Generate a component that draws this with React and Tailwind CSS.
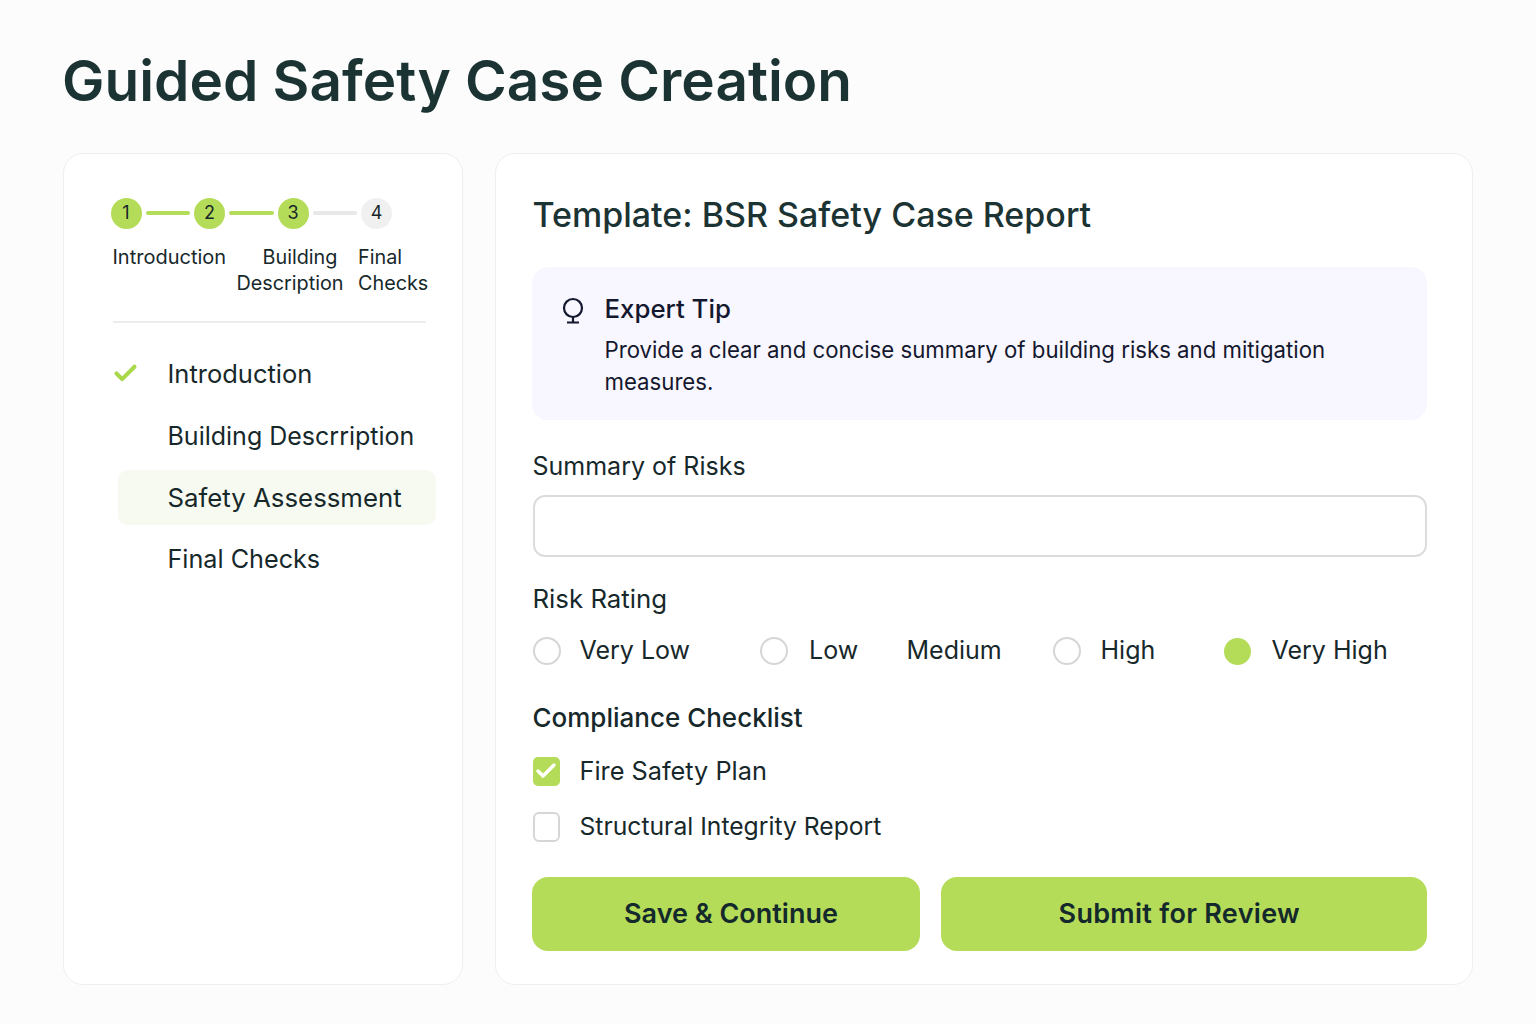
import React from 'react';
import { Check } from 'lucide-react';

const fontStack = "font-['Inter',sans-serif]";

const StepDot = ({ n, done }) => (
  <div
    className={`flex h-[31px] w-[31px] shrink-0 items-center justify-center rounded-full text-[18px] leading-none text-[#17252a] ${
      done ? 'bg-[#b4dc58]' : 'bg-[#f0f0f0]'
    }`}
  >
    {n}
  </div>
);

const StepLine = ({ done }) => (
  <div className={`mx-[4px] h-[4px] w-[44.5px] rounded-full ${done ? 'bg-[#b4dc58]' : 'bg-[#e8e8e8]'}`} />
);

const Radio = ({ on }) =>
  on ? (
    <span className="h-[27px] w-[27px] shrink-0 rounded-full bg-[#b4dc58]" />
  ) : (
    <span className="h-[28px] w-[28px] shrink-0 rounded-full border-2 border-[#d6d6d6] bg-white" />
  );

const RiskOption = ({ label, on, className, labelClass = 'ml-[19px]' }) => (
  <div className={`flex items-center ${className}`}>
    <Radio on={on} />
    <span className={labelClass}>{label}</span>
  </div>
);

export default function App() {
  return (
    <div className={`min-h-screen bg-[#fcfcfc] px-[63px] pt-[48px] text-[#17282b] ${fontStack}`}>
      <h1 className="-ml-[1px] h-[66px] text-[56.7px] font-semibold leading-[66px] text-[#1c3333]">
        Guided Safety Case Creation
      </h1>

      <div className="mt-[39px] flex h-[831.5px] gap-[32px]">
        {/* Steps */}
        <aside className="w-[400px] shrink-0 rounded-[20px] border-[1.5px] border-[#efefef] bg-white pl-[48.5px] pr-[36px] pt-[43.5px]">
          <div className="-ml-[2px] flex items-center">
            <StepDot n={1} done />
            <StepLine done />
            <StepDot n={2} done />
            <StepLine done />
            <StepDot n={3} done />
            <StepLine />
            <StepDot n={4} />
          </div>
          <div className="mt-[15px] flex h-[53px] text-[19.8px] leading-[26.5px]">
            <span className="w-[124px] shrink-0 text-[20px]">Introduction</span>
            <span className="w-[121.5px] shrink-0">
              <span className="pl-[26px]">Building</span>
              <br />
              Description
            </span>
            <span className="shrink-0">
              Final
              <br />
              Checks
            </span>
          </div>
          <div className="mt-[24px] h-[2px] bg-[#ececec]" />

          <ul className="mt-[20px] leading-[62px]">
            <li className="flex items-center text-[25.5px]">
              <Check className="-ml-[1px] h-[27px] w-[27px] text-[#a9d84b]" strokeWidth={3.6} />
              <span className="ml-[29px]">Introduction</span>
            </li>
            <li className="pl-[55px] text-[25px]">Building Descrription</li>
            <li className="-mr-[9.5px] ml-[5px] mt-[3px] rounded-[10px] bg-[#f6faf0] pl-[50px] text-[25.8px] leading-[55px]">
              Safety Assessment
            </li>
            <li className="pl-[55px] text-[25.2px] leading-[69px]">Final Checks</li>
          </ul>
        </aside>

        {/* Form */}
        <main className="flex-1 rounded-[20px] border-[1.5px] border-[#efefef] bg-white pl-[36.5px] pr-[45px] pt-[36px]">
          <h2 className="text-[34px] font-medium leading-[50px] text-[#1c3333]">
            Template: BSR Safety Case Report
          </h2>

          <div className="-ml-[1px] mt-[27px] flex h-[153px] rounded-[16px] bg-[#f8f6fe] pl-[29px] pt-[24px] text-[#14182e]">
            <svg viewBox="0 0 24 28" className="mt-[6px] h-[28px] w-[24px] shrink-0" fill="none" stroke="currentColor" strokeWidth="2.2">
              <circle cx="12" cy="11" r="9" />
              <path d="M12 20v5M6 25.5h12" />
            </svg>
            <div className="ml-[20px]">
              <div className="text-[25.8px] font-[450] leading-[36px]">Expert Tip</div>
              <p className="mt-[7px] w-[740px] text-[22.2px] leading-[32px]">
                Provide a clear and concise summary of building risks and mitigation measures.
              </p>
            </div>
          </div>

          <label className="mt-[28px] block text-[25px] leading-[36px]">Summary of Risks</label>
          <input className="mt-[11px] block h-[62px] w-full rounded-[12px] border-2 border-[#dcdcdc] bg-white outline-none" />

          <div className="mt-[24px] text-[25.8px] font-normal leading-[36px]">Risk Rating</div>
          <div className="mt-[16px] flex h-[36px] items-center text-[25px]">
            <RiskOption label="Very Low" className="w-[227.5px]" />
            <RiskOption label="Low" className="w-[146.5px]" labelClass="ml-[21px]" />
            <span className="w-[146px]">Medium</span>
            <RiskOption label="High" className="w-[171px]" labelClass="ml-[20px]" />
            <RiskOption label="Very High" on labelClass="ml-[21px]" />
          </div>

          <div className="mt-[31px] text-[26px] font-[450] leading-[36px]">Compliance Checklist</div>
          <div className="mt-[17px] flex h-[36px] items-center text-[25.3px]">
            <span className="flex h-[29px] w-[27.5px] items-center justify-center rounded-[5px] bg-[#b4dc58]">
              <Check className="h-[24px] w-[24px] text-white" strokeWidth={3.5} />
            </span>
            <span className="ml-[19.5px]">Fire Safety Plan</span>
          </div>
          <div className="mt-[20px] flex h-[36px] items-center text-[24.7px]">
            <span className="h-[30px] w-[27.5px] rounded-[6px] border-2 border-[#d6d6d6] bg-white" />
            <span className="ml-[19.5px]">Structural Integrity Report</span>
          </div>

          <div className="-ml-[1px] mt-[32px] flex gap-[21px]">
            <button className="h-[74px] w-[388px] rounded-[16px] bg-[#b4dc58] pl-[11px] text-[27px] font-semibold text-[#14292b]">
              Save &amp; Continue
            </button>
            <button className="h-[74px] flex-1 rounded-[16px] bg-[#b4dc58] pr-[9px] text-[27px] font-semibold tracking-[0.3px] text-[#14292b]">
              Submit for Review
            </button>
          </div>
        </main>
      </div>
    </div>
  );
}
